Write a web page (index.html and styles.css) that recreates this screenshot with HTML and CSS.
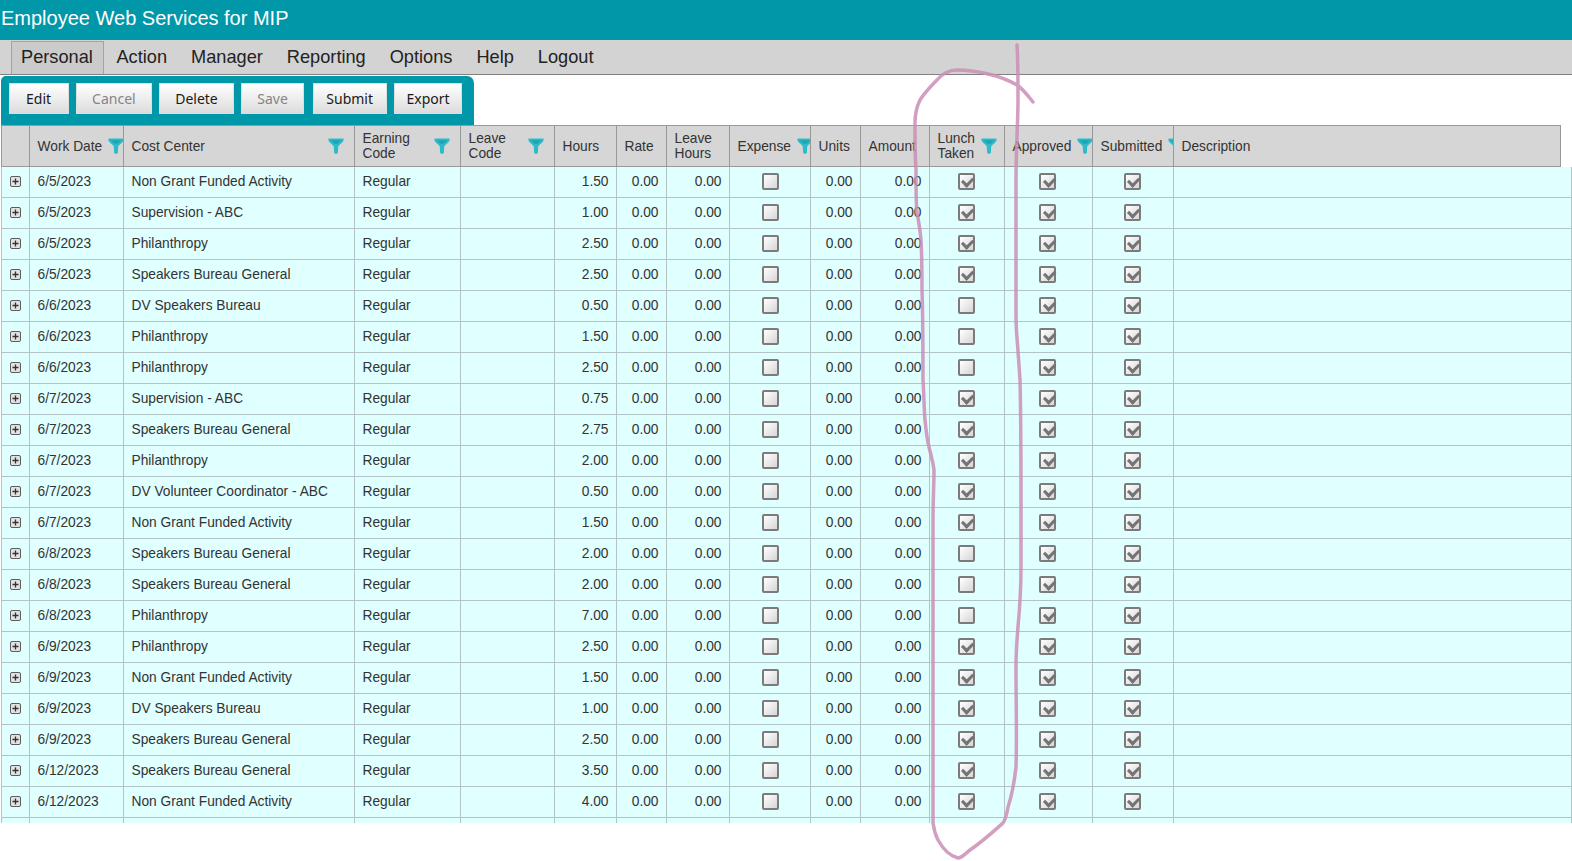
FILE: index.html
```html
<!DOCTYPE html>
<html lang="en">
<head>
<meta charset="utf-8">
<title>Employee Web Services for MIP</title>
<link rel="stylesheet" href="styles.css">
</head>
<body>
<svg width="0" height="0" class="defs" aria-hidden="true">
  <symbol id="funnel" viewBox="0 0 16 16">
    <path d="M.3 1.6 C.3 .8 .9 .4 1.6 .4 H14.4 C15.1 .4 15.7 .8 15.7 1.6 C15.7 2.8 15 3.6 14.2 4.4 L10.8 7.6 C10.4 8 10.3 8.4 10.2 8.9 L9.9 14.2 C9.8 15.2 9 15.7 8 15.7 C7 15.7 6.2 15.2 6.1 14.2 L5.8 8.9 C5.7 8.4 5.6 8 5.2 7.6 L1.8 4.4 C1 3.6 .3 2.8 .3 1.6 Z" fill="#2fbac8"/>
    <path d="M2.6 2.2 H13.4 L9.6 5.8 H6.4 Z" fill="#1ba6b6"/>
  </symbol>
  <symbol id="plus" viewBox="0 0 11 11">
    <rect x=".5" y=".5" width="10" height="10" rx="1.5" fill="#e2e2e2" stroke="#5c5c5c"/>
    <path d="M5.5 2.5 V8.5 M2.5 5.5 H8.5" stroke="#333" stroke-width="1.3"/>
  </symbol>
</svg>
<header class="title">Employee Web Services for MIP</header>
<nav class="menu">
  <a class="menu-item active">Personal</a>
  <a class="menu-item">Action</a>
  <a class="menu-item">Manager</a>
  <a class="menu-item">Reporting</a>
  <a class="menu-item">Options</a>
  <a class="menu-item">Help</a>
  <a class="menu-item">Logout</a>
</nav>
<div class="toolbar">
  <button class="btn btn-edit">Edit</button>
  <button class="btn" disabled>Cancel</button>
  <button class="btn">Delete</button>
  <button class="btn" disabled>Save</button>
  <button class="btn btn-submit">Submit</button>
  <button class="btn btn-export">Export</button>
</div>
<main class="grid">
<table class="head-table">
<colgroup><col class="c1"><col class="c2"><col class="c3"><col class="c4"><col class="c5"><col class="c6"><col class="c7"><col class="c8"><col class="c9"><col class="c10"><col class="c11"><col class="c12"><col class="c13"><col class="c14"><col class="c15"></colgroup>
<thead><tr>
<th></th>
<th><div class="hd"><span>Work Date</span><svg class="filter"><use href="#funnel"/></svg></div></th>
<th><div class="hd"><span>Cost Center</span><svg class="filter"><use href="#funnel"/></svg></div></th>
<th><div class="hd"><span>Earning<br>Code</span><svg class="filter"><use href="#funnel"/></svg></div></th>
<th><div class="hd"><span>Leave<br>Code</span><svg class="filter"><use href="#funnel"/></svg></div></th>
<th><div class="hd"><span>Hours</span></div></th>
<th><div class="hd"><span>Rate</span></div></th>
<th><div class="hd"><span>Leave<br>Hours</span></div></th>
<th><div class="hd"><span>Expense</span><svg class="filter"><use href="#funnel"/></svg></div></th>
<th><div class="hd"><span>Units</span></div></th>
<th><div class="hd"><span>Amount</span></div></th>
<th><div class="hd"><span>Lunch<br>Taken</span><svg class="filter"><use href="#funnel"/></svg></div></th>
<th><div class="hd"><span>Approved</span><svg class="filter"><use href="#funnel"/></svg></div></th>
<th><div class="hd"><span>Submitted</span><svg class="filter"><use href="#funnel"/></svg></div></th>
<th><div class="hd"><span>Description</span></div></th>
</tr></thead>
</table>
<div class="body-wrap">
<table class="body-table">
<colgroup><col class="c1"><col class="c2"><col class="c3"><col class="c4"><col class="c5"><col class="c6"><col class="c7"><col class="c8"><col class="c9"><col class="c10"><col class="c11"><col class="c12"><col class="c13"><col class="c14"><col></colgroup>
<tbody>
<tr><td class="ex"><svg class="plus"><use href="#plus"/></svg></td><td>6/5/2023</td><td>Non Grant Funded Activity</td><td>Regular</td><td></td><td class="n">1.50</td><td class="n">0.00</td><td class="n">0.00</td><td class="k"><input type="checkbox" class="cb"></td><td class="n">0.00</td><td class="n">0.00</td><td class="k"><input type="checkbox" class="cb" checked></td><td class="k"><input type="checkbox" class="cb" checked></td><td class="k"><input type="checkbox" class="cb" checked></td><td></td></tr>
<tr><td class="ex"><svg class="plus"><use href="#plus"/></svg></td><td>6/5/2023</td><td>Supervision - ABC</td><td>Regular</td><td></td><td class="n">1.00</td><td class="n">0.00</td><td class="n">0.00</td><td class="k"><input type="checkbox" class="cb"></td><td class="n">0.00</td><td class="n">0.00</td><td class="k"><input type="checkbox" class="cb" checked></td><td class="k"><input type="checkbox" class="cb" checked></td><td class="k"><input type="checkbox" class="cb" checked></td><td></td></tr>
<tr><td class="ex"><svg class="plus"><use href="#plus"/></svg></td><td>6/5/2023</td><td>Philanthropy</td><td>Regular</td><td></td><td class="n">2.50</td><td class="n">0.00</td><td class="n">0.00</td><td class="k"><input type="checkbox" class="cb"></td><td class="n">0.00</td><td class="n">0.00</td><td class="k"><input type="checkbox" class="cb" checked></td><td class="k"><input type="checkbox" class="cb" checked></td><td class="k"><input type="checkbox" class="cb" checked></td><td></td></tr>
<tr><td class="ex"><svg class="plus"><use href="#plus"/></svg></td><td>6/5/2023</td><td>Speakers Bureau General</td><td>Regular</td><td></td><td class="n">2.50</td><td class="n">0.00</td><td class="n">0.00</td><td class="k"><input type="checkbox" class="cb"></td><td class="n">0.00</td><td class="n">0.00</td><td class="k"><input type="checkbox" class="cb" checked></td><td class="k"><input type="checkbox" class="cb" checked></td><td class="k"><input type="checkbox" class="cb" checked></td><td></td></tr>
<tr><td class="ex"><svg class="plus"><use href="#plus"/></svg></td><td>6/6/2023</td><td>DV Speakers Bureau</td><td>Regular</td><td></td><td class="n">0.50</td><td class="n">0.00</td><td class="n">0.00</td><td class="k"><input type="checkbox" class="cb"></td><td class="n">0.00</td><td class="n">0.00</td><td class="k"><input type="checkbox" class="cb"></td><td class="k"><input type="checkbox" class="cb" checked></td><td class="k"><input type="checkbox" class="cb" checked></td><td></td></tr>
<tr><td class="ex"><svg class="plus"><use href="#plus"/></svg></td><td>6/6/2023</td><td>Philanthropy</td><td>Regular</td><td></td><td class="n">1.50</td><td class="n">0.00</td><td class="n">0.00</td><td class="k"><input type="checkbox" class="cb"></td><td class="n">0.00</td><td class="n">0.00</td><td class="k"><input type="checkbox" class="cb"></td><td class="k"><input type="checkbox" class="cb" checked></td><td class="k"><input type="checkbox" class="cb" checked></td><td></td></tr>
<tr><td class="ex"><svg class="plus"><use href="#plus"/></svg></td><td>6/6/2023</td><td>Philanthropy</td><td>Regular</td><td></td><td class="n">2.50</td><td class="n">0.00</td><td class="n">0.00</td><td class="k"><input type="checkbox" class="cb"></td><td class="n">0.00</td><td class="n">0.00</td><td class="k"><input type="checkbox" class="cb"></td><td class="k"><input type="checkbox" class="cb" checked></td><td class="k"><input type="checkbox" class="cb" checked></td><td></td></tr>
<tr><td class="ex"><svg class="plus"><use href="#plus"/></svg></td><td>6/7/2023</td><td>Supervision - ABC</td><td>Regular</td><td></td><td class="n">0.75</td><td class="n">0.00</td><td class="n">0.00</td><td class="k"><input type="checkbox" class="cb"></td><td class="n">0.00</td><td class="n">0.00</td><td class="k"><input type="checkbox" class="cb" checked></td><td class="k"><input type="checkbox" class="cb" checked></td><td class="k"><input type="checkbox" class="cb" checked></td><td></td></tr>
<tr><td class="ex"><svg class="plus"><use href="#plus"/></svg></td><td>6/7/2023</td><td>Speakers Bureau General</td><td>Regular</td><td></td><td class="n">2.75</td><td class="n">0.00</td><td class="n">0.00</td><td class="k"><input type="checkbox" class="cb"></td><td class="n">0.00</td><td class="n">0.00</td><td class="k"><input type="checkbox" class="cb" checked></td><td class="k"><input type="checkbox" class="cb" checked></td><td class="k"><input type="checkbox" class="cb" checked></td><td></td></tr>
<tr><td class="ex"><svg class="plus"><use href="#plus"/></svg></td><td>6/7/2023</td><td>Philanthropy</td><td>Regular</td><td></td><td class="n">2.00</td><td class="n">0.00</td><td class="n">0.00</td><td class="k"><input type="checkbox" class="cb"></td><td class="n">0.00</td><td class="n">0.00</td><td class="k"><input type="checkbox" class="cb" checked></td><td class="k"><input type="checkbox" class="cb" checked></td><td class="k"><input type="checkbox" class="cb" checked></td><td></td></tr>
<tr><td class="ex"><svg class="plus"><use href="#plus"/></svg></td><td>6/7/2023</td><td>DV Volunteer Coordinator - ABC</td><td>Regular</td><td></td><td class="n">0.50</td><td class="n">0.00</td><td class="n">0.00</td><td class="k"><input type="checkbox" class="cb"></td><td class="n">0.00</td><td class="n">0.00</td><td class="k"><input type="checkbox" class="cb" checked></td><td class="k"><input type="checkbox" class="cb" checked></td><td class="k"><input type="checkbox" class="cb" checked></td><td></td></tr>
<tr><td class="ex"><svg class="plus"><use href="#plus"/></svg></td><td>6/7/2023</td><td>Non Grant Funded Activity</td><td>Regular</td><td></td><td class="n">1.50</td><td class="n">0.00</td><td class="n">0.00</td><td class="k"><input type="checkbox" class="cb"></td><td class="n">0.00</td><td class="n">0.00</td><td class="k"><input type="checkbox" class="cb" checked></td><td class="k"><input type="checkbox" class="cb" checked></td><td class="k"><input type="checkbox" class="cb" checked></td><td></td></tr>
<tr><td class="ex"><svg class="plus"><use href="#plus"/></svg></td><td>6/8/2023</td><td>Speakers Bureau General</td><td>Regular</td><td></td><td class="n">2.00</td><td class="n">0.00</td><td class="n">0.00</td><td class="k"><input type="checkbox" class="cb"></td><td class="n">0.00</td><td class="n">0.00</td><td class="k"><input type="checkbox" class="cb"></td><td class="k"><input type="checkbox" class="cb" checked></td><td class="k"><input type="checkbox" class="cb" checked></td><td></td></tr>
<tr><td class="ex"><svg class="plus"><use href="#plus"/></svg></td><td>6/8/2023</td><td>Speakers Bureau General</td><td>Regular</td><td></td><td class="n">2.00</td><td class="n">0.00</td><td class="n">0.00</td><td class="k"><input type="checkbox" class="cb"></td><td class="n">0.00</td><td class="n">0.00</td><td class="k"><input type="checkbox" class="cb"></td><td class="k"><input type="checkbox" class="cb" checked></td><td class="k"><input type="checkbox" class="cb" checked></td><td></td></tr>
<tr><td class="ex"><svg class="plus"><use href="#plus"/></svg></td><td>6/8/2023</td><td>Philanthropy</td><td>Regular</td><td></td><td class="n">7.00</td><td class="n">0.00</td><td class="n">0.00</td><td class="k"><input type="checkbox" class="cb"></td><td class="n">0.00</td><td class="n">0.00</td><td class="k"><input type="checkbox" class="cb"></td><td class="k"><input type="checkbox" class="cb" checked></td><td class="k"><input type="checkbox" class="cb" checked></td><td></td></tr>
<tr><td class="ex"><svg class="plus"><use href="#plus"/></svg></td><td>6/9/2023</td><td>Philanthropy</td><td>Regular</td><td></td><td class="n">2.50</td><td class="n">0.00</td><td class="n">0.00</td><td class="k"><input type="checkbox" class="cb"></td><td class="n">0.00</td><td class="n">0.00</td><td class="k"><input type="checkbox" class="cb" checked></td><td class="k"><input type="checkbox" class="cb" checked></td><td class="k"><input type="checkbox" class="cb" checked></td><td></td></tr>
<tr><td class="ex"><svg class="plus"><use href="#plus"/></svg></td><td>6/9/2023</td><td>Non Grant Funded Activity</td><td>Regular</td><td></td><td class="n">1.50</td><td class="n">0.00</td><td class="n">0.00</td><td class="k"><input type="checkbox" class="cb"></td><td class="n">0.00</td><td class="n">0.00</td><td class="k"><input type="checkbox" class="cb" checked></td><td class="k"><input type="checkbox" class="cb" checked></td><td class="k"><input type="checkbox" class="cb" checked></td><td></td></tr>
<tr><td class="ex"><svg class="plus"><use href="#plus"/></svg></td><td>6/9/2023</td><td>DV Speakers Bureau</td><td>Regular</td><td></td><td class="n">1.00</td><td class="n">0.00</td><td class="n">0.00</td><td class="k"><input type="checkbox" class="cb"></td><td class="n">0.00</td><td class="n">0.00</td><td class="k"><input type="checkbox" class="cb" checked></td><td class="k"><input type="checkbox" class="cb" checked></td><td class="k"><input type="checkbox" class="cb" checked></td><td></td></tr>
<tr><td class="ex"><svg class="plus"><use href="#plus"/></svg></td><td>6/9/2023</td><td>Speakers Bureau General</td><td>Regular</td><td></td><td class="n">2.50</td><td class="n">0.00</td><td class="n">0.00</td><td class="k"><input type="checkbox" class="cb"></td><td class="n">0.00</td><td class="n">0.00</td><td class="k"><input type="checkbox" class="cb" checked></td><td class="k"><input type="checkbox" class="cb" checked></td><td class="k"><input type="checkbox" class="cb" checked></td><td></td></tr>
<tr><td class="ex"><svg class="plus"><use href="#plus"/></svg></td><td>6/12/2023</td><td>Speakers Bureau General</td><td>Regular</td><td></td><td class="n">3.50</td><td class="n">0.00</td><td class="n">0.00</td><td class="k"><input type="checkbox" class="cb"></td><td class="n">0.00</td><td class="n">0.00</td><td class="k"><input type="checkbox" class="cb" checked></td><td class="k"><input type="checkbox" class="cb" checked></td><td class="k"><input type="checkbox" class="cb" checked></td><td></td></tr>
<tr><td class="ex"><svg class="plus"><use href="#plus"/></svg></td><td>6/12/2023</td><td>Non Grant Funded Activity</td><td>Regular</td><td></td><td class="n">4.00</td><td class="n">0.00</td><td class="n">0.00</td><td class="k"><input type="checkbox" class="cb"></td><td class="n">0.00</td><td class="n">0.00</td><td class="k"><input type="checkbox" class="cb" checked></td><td class="k"><input type="checkbox" class="cb" checked></td><td class="k"><input type="checkbox" class="cb" checked></td><td></td></tr>
<tr><td></td><td></td><td></td><td></td><td></td><td></td><td></td><td></td><td></td><td></td><td></td><td></td><td></td><td></td><td></td></tr>
</tbody>
</table>
</div>
</main>
<svg class="scribble" viewBox="0 0 1572 861" aria-hidden="true">
  <path d="M1033 102 C1028 96 1024 90 1017 85 C1000 75 975 70 957 70 C948 70 942 74 937 80 C931 86 925 92 920 100 C917 106 915 114 915 123 C915 140 915 155 916 170 C916 190 916 205 917 213 C919 222 920 230 921 240 C922 260 922 275 922 290 C923 320 923 350 923 380 C924 395 924 408 925 420 C926 430 927 440 929 447 C931 455 933 462 934 470 C934 485 933 500 933 520 C933 600 933 650 933 717 C933 760 933 800 933 823 C934 830 936 836 938 840 C943 849 950 856 958 858 C962 858 966 853 970 850 C982 842 993 832 1003 823 C1006 819 1007 813 1008 807 C1012 795 1014 785 1016 767 C1017 740 1016 700 1016 667 C1016 650 1017 640 1018 627 C1020 605 1021 585 1021 567 C1021 540 1021 520 1021 500 C1021 460 1021 420 1020 380 C1019 365 1018 350 1017 338 C1016 328 1016 320 1016 310 C1016 280 1016 230 1016 180 C1016 150 1018 120 1018 100 C1018 80 1018 60 1017 45" />
</svg>
</body>
</html>
```
FILE: styles.css
```css
* { box-sizing: border-box; }
html, body { margin: 0; padding: 0; height: 100%; overflow: hidden; background: #fff; }
body { font-family: "Liberation Sans", Arial, sans-serif; color: #333; position: relative; }
.defs { position: absolute; }

.title {
  height: 40px;
  padding: 6px 0 0 1px;
  background: #0097a9;
  color: #fff;
  font-size: 20px;
  line-height: 24px;
}

.menu {
  display: flex;
  height: 35px;
  padding: 1px 0 0 11px;
  background: #d3d3d3;
  border-bottom: 1px solid #808080;
  font-size: 18.2px;
  line-height: 32px;
  color: #222;
}
.menu-item { padding: 0 12px; }
.menu-item.active {
  padding: 0 10px 0 9px;
  margin-right: .7px;
  line-height: 31px;
  background: #cbcbcb;
  border: 1px solid #a3a3a3;
  border-bottom: 0;
}

.toolbar {
  display: inline-flex;
  vertical-align: top;
  gap: 7.5px;
  height: 49px;
  width: 473px;
  margin: 1px 0 0 1px;
  padding: 7px 10px 0 7.5px;
  background: #0097a9;
  border-radius: 5px 7px 0 0;
}
.btn {
  height: 31px;
  padding: 0 15px;
  border: 1px solid #dedede;
  background: linear-gradient(#ffffff, #dcdcdc);
  font: 14px "Noto Sans", "Open Sans", sans-serif;
  color: #1a1a1a;
}
.btn:disabled { color: #858585; }
.btn-edit { padding: 0 16.5px; }
.btn-submit { padding: 0 12.5px; margin-left: 1.5px; }
.btn-export { padding: 0 11.5px; }

.grid { margin-left: 1px; }
table { border-collapse: separate; border-spacing: 0; table-layout: fixed; }
.head-table { width: 1560px; border-left: 1px solid #999; border-top: 1px solid #999; }
.body-wrap { height: 656px; overflow: hidden; }
.body-table { width: 1571px; border-left: 1px solid #b4c4c6; }

.c1 { width: 28px; }
.c2 { width: 94px; }
.c3 { width: 231px; }
.c4 { width: 106px; }
.c5 { width: 94px; }
.c6 { width: 62px; }
.c7 { width: 50px; }
.c8 { width: 63px; }
.c9 { width: 81px; }
.c10 { width: 50px; }
.c11 { width: 69px; }
.c12 { width: 75px; }
.c13 { width: 88px; }
.c14 { width: 81px; }
.c15 { width: 387px; }

th {
  height: 41px;
  padding: 0 10px 0 7.5px;
  background: #d6d6d6;
  border-right: 1px solid #999;
  border-bottom: 1px solid #999;
  font-size: 13.75px;
  line-height: 15px;
  font-weight: 400;
  text-align: left;
  overflow: hidden;
}
.hd { display: flex; align-items: center; justify-content: space-between; gap: 6px; white-space: nowrap; }
.filter { flex: none; width: 16px; height: 16px; }

td {
  height: 31px;
  padding: 0 7.5px 2px;
  background: #e0ffff;
  border-right: 1px solid #b4c4c6;
  border-bottom: 1px solid #b4c4c6;
  font-size: 13.75px;
  white-space: nowrap;
  overflow: hidden;
}
td.n { text-align: right; }
td.k { padding: 0 2px 2px 0; text-align: center; }
td.k:nth-child(9) { padding-right: 0; }
td.ex { padding: 0 0 2px; text-align: center; }
.plus { display: block; width: 11px; height: 11px; margin: 0 auto; }

.cb {
  appearance: none;
  position: relative;
  display: block;
  width: 17px;
  height: 17px;
  margin: 0 auto;
  background: linear-gradient(135deg, #ffffff, #d6d6d6);
  border: 2px solid #7b7b7b;
  border-radius: 2px;
}
.cb:checked::after {
  content: "";
  position: absolute;
  left: 2.5px;
  top: 2.5px;
  width: 8px;
  height: 4.5px;
  border-left: 3px solid #747474;
  border-bottom: 3px solid #747474;
  transform: rotate(-45deg);
}

.scribble {
  position: absolute;
  left: 0;
  top: 0;
  width: 1572px;
  height: 861px;
  pointer-events: none;
  fill: none;
  stroke: #cb8fb6;
  stroke-width: 3.5;
  stroke-linecap: round;
  stroke-linejoin: round;
  opacity: .85;
}
```
